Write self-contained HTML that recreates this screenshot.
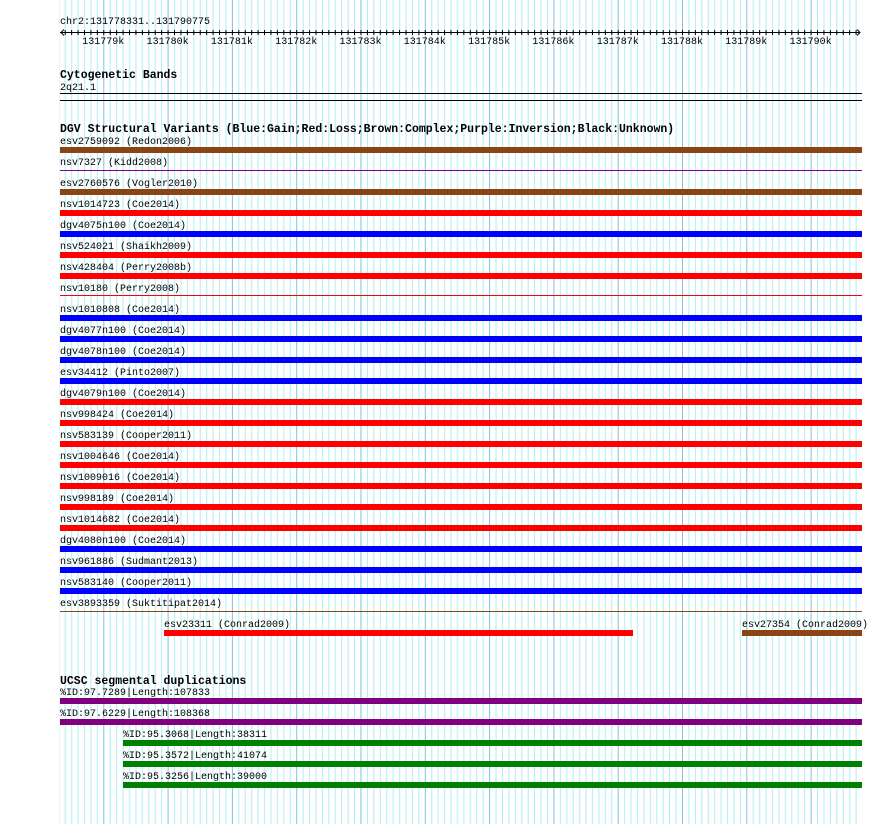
<!DOCTYPE html>
<html><head><meta charset="utf-8"><style>
html,body{margin:0;padding:0;background:#fff;width:890px;height:824px;overflow:hidden}
svg{display:block}
text{font-family:"Liberation Mono","DejaVu Sans Mono",monospace;font-size:10px;fill:#000}
.b{font-weight:bold;font-size:11.5px}
</style></head><body>
<svg width="890" height="824" xmlns="http://www.w3.org/2000/svg">
<defs>
<pattern id="g" patternUnits="userSpaceOnUse" x="103.3" y="0" width="64.3" height="824">
<rect x="0" y="0" width="1" height="824" fill="#7ec2ea"/>
<rect x="6.43" y="0" width="1" height="824" fill="#aeeef2"/>
<rect x="12.86" y="0" width="1" height="824" fill="#aeeef2"/>
<rect x="19.29" y="0" width="1" height="824" fill="#aeeef2"/>
<rect x="25.72" y="0" width="1" height="824" fill="#aeeef2"/>
<rect x="32.15" y="0" width="1" height="824" fill="#aeeef2"/>
<rect x="38.58" y="0" width="1" height="824" fill="#aeeef2"/>
<rect x="45.01" y="0" width="1" height="824" fill="#aeeef2"/>
<rect x="51.44" y="0" width="1" height="824" fill="#aeeef2"/>
<rect x="57.87" y="0" width="1" height="824" fill="#aeeef2"/>
</pattern>
</defs>
<rect x="59" y="0" width="800" height="824" fill="url(#g)"/>

<text x="60" y="24">chr2:131778331..131790775</text>
<line x1="60" y1="32.5" x2="860" y2="32.5" stroke="#000"/>
<line x1="64.7" y1="32.5" x2="860" y2="32.5" stroke="#000" stroke-width="5" stroke-dasharray="1 5.43"/>
<path d="M64 29.5 L61 32.5 L64 35.5 M857 29.5 L860 32.5 L857 35.5" stroke="#000" fill="none"/>
<g text-anchor="middle">
<text x="103.3" y="44">131779k</text><text x="167.6" y="44">131780k</text><text x="231.9" y="44">131781k</text><text x="296.2" y="44">131782k</text><text x="360.5" y="44">131783k</text><text x="424.8" y="44">131784k</text><text x="489.1" y="44">131785k</text><text x="553.4" y="44">131786k</text><text x="617.7" y="44">131787k</text><text x="682" y="44">131788k</text><text x="746.3" y="44">131789k</text><text x="810.6" y="44">131790k</text>
</g>

<text class="b" x="60" y="78">Cytogenetic Bands</text>
<text x="60" y="90">2q21.1</text>
<rect x="60" y="93" width="802" height="1" fill="#000"/>
<rect x="60" y="100" width="802" height="1" fill="#000"/>

<text class="b" x="60" y="132">DGV Structural Variants (Blue:Gain;Red:Loss;Brown:Complex;Purple:Inversion;Black:Unknown)</text>
<text x="60" y="144">esv2759092 (Redon2006)</text><rect x="60" y="147" width="802" height="6" fill="#8b4513"/>
<text x="60" y="165">nsv7327 (Kidd2008)</text><rect x="60" y="170" width="802" height="1" fill="#800080"/>
<text x="60" y="186">esv2760576 (Vogler2010)</text><rect x="60" y="189" width="802" height="6" fill="#8b4513"/>
<text x="60" y="207">nsv1014723 (Coe2014)</text><rect x="60" y="210" width="802" height="6" fill="#f00"/>
<text x="60" y="228">dgv4075n100 (Coe2014)</text><rect x="60" y="231" width="802" height="6" fill="#00f"/>
<text x="60" y="249">nsv524021 (Shaikh2009)</text><rect x="60" y="252" width="802" height="6" fill="#f00"/>
<text x="60" y="270">nsv428404 (Perry2008b)</text><rect x="60" y="273" width="802" height="6" fill="#f00"/>
<text x="60" y="291">nsv10180 (Perry2008)</text><rect x="60" y="295" width="802" height="1" fill="#f00"/>
<text x="60" y="312">nsv1010808 (Coe2014)</text><rect x="60" y="315" width="802" height="6" fill="#00f"/>
<text x="60" y="333">dgv4077n100 (Coe2014)</text><rect x="60" y="336" width="802" height="6" fill="#00f"/>
<text x="60" y="354">dgv4078n100 (Coe2014)</text><rect x="60" y="357" width="802" height="6" fill="#00f"/>
<text x="60" y="375">esv34412 (Pinto2007)</text><rect x="60" y="378" width="802" height="6" fill="#00f"/>
<text x="60" y="396">dgv4079n100 (Coe2014)</text><rect x="60" y="399" width="802" height="6" fill="#f00"/>
<text x="60" y="417">nsv998424 (Coe2014)</text><rect x="60" y="420" width="802" height="6" fill="#f00"/>
<text x="60" y="438">nsv583139 (Cooper2011)</text><rect x="60" y="441" width="802" height="6" fill="#f00"/>
<text x="60" y="459">nsv1004646 (Coe2014)</text><rect x="60" y="462" width="802" height="6" fill="#f00"/>
<text x="60" y="480">nsv1009016 (Coe2014)</text><rect x="60" y="483" width="802" height="6" fill="#f00"/>
<text x="60" y="501">nsv998189 (Coe2014)</text><rect x="60" y="504" width="802" height="6" fill="#f00"/>
<text x="60" y="522">nsv1014682 (Coe2014)</text><rect x="60" y="525" width="802" height="6" fill="#f00"/>
<text x="60" y="543">dgv4080n100 (Coe2014)</text><rect x="60" y="546" width="802" height="6" fill="#00f"/>
<text x="60" y="564">nsv961886 (Sudmant2013)</text><rect x="60" y="567" width="802" height="6" fill="#00f"/>
<text x="60" y="585">nsv583140 (Cooper2011)</text><rect x="60" y="588" width="802" height="6" fill="#00f"/>
<text x="60" y="606">esv3893359 (Suktitipat2014)</text><rect x="60" y="611" width="802" height="1" fill="#8b4513"/>
<text x="164" y="627">esv23311 (Conrad2009)</text><rect x="164" y="630" width="469" height="6" fill="#f00"/>
<text x="742" y="627">esv27354 (Conrad2009)</text><rect x="742" y="630" width="120" height="6" fill="#8b4513"/>

<text class="b" x="60" y="684">UCSC segmental duplications</text>
<text x="60" y="695">%ID:97.7289|Length:107833</text><rect x="60" y="698" width="802" height="6" fill="#800080"/>
<text x="60" y="716">%ID:97.6229|Length:108368</text><rect x="60" y="719" width="802" height="6" fill="#800080"/>
<text x="123" y="737">%ID:95.3068|Length:38311</text><rect x="123" y="740" width="739" height="6" fill="#008000"/>
<text x="123" y="758">%ID:95.3572|Length:41074</text><rect x="123" y="761" width="739" height="6" fill="#008000"/>
<text x="123" y="779">%ID:95.3256|Length:39000</text><rect x="123" y="782" width="739" height="6" fill="#008000"/>
</svg>
</body></html>
